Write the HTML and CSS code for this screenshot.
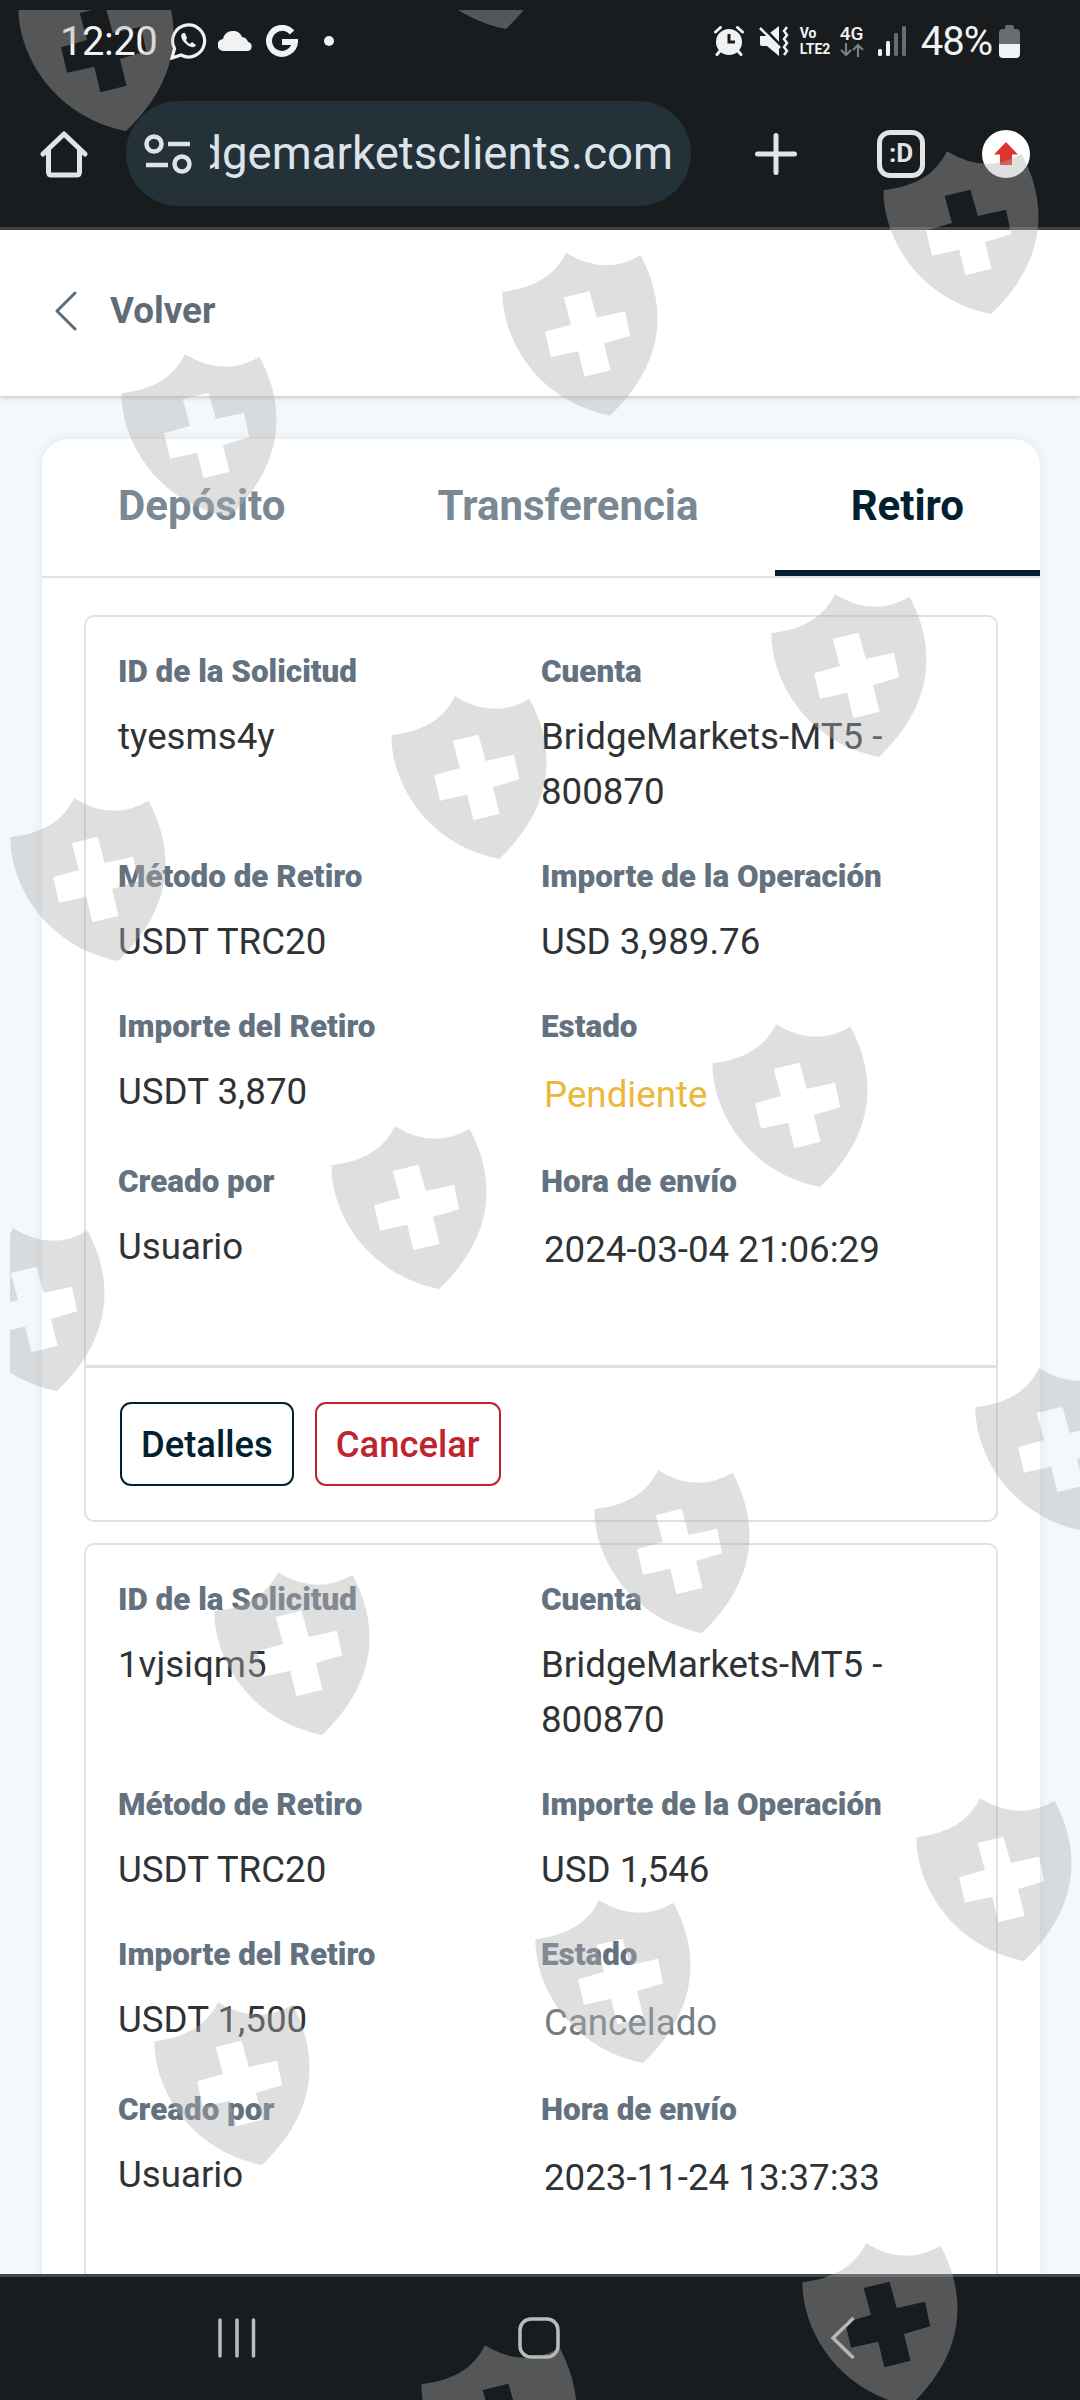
FILE: index.html
```html
<!DOCTYPE html>
<html lang="es">
<head>
    <meta charset="UTF-8">
    <meta name="viewport" content="width=device-width, initial-scale=1.0">
    <title>Retiro</title>
    <link rel="stylesheet" href="styles.css">
</head>
<body>
    <div class="status-bar">
        <span class="clock">12:20</span>
        <svg class="ico-whatsapp" width="38" height="38" viewBox="0 0 38 38" fill="none" stroke="#f0f2f3">
            <path d="M2 36l2.500-9.500A16 16 0 1 1 11 33z" stroke-width="3.200"/>
            <path d="M13 11c-3 2-2 6 2 10s9 6 11 2l-4-3-2 2c-2-1-3-2-4-4l1-2-2-5z" fill="#f0f2f3" stroke="none"/>
        </svg>
        <svg class="ico-cloud" width="36" height="20" viewBox="0 0 36 20" fill="#f0f2f3">
            <path d="M6 20a6 6 0 0 1-1-12A10 10 0 0 1 24 6a7 7 0 0 1 6 5 4.600 4.600 0 0 1 0 9z"/>
        </svg>
        <svg class="ico-google" width="32" height="33" viewBox="0 0 32 33" fill="none" stroke="#f0f2f3" stroke-width="6">
            <path d="M26 7.500A13 13 0 1 0 29 17H16"/>
        </svg>
        <span class="dot"></span>
        <div class="status-right">
            <svg class="ico-alarm" width="30" height="30" viewBox="0 0 30 30">
                <circle cx="15" cy="16" r="13" fill="#f0f2f3"/>
                <path d="M1.500 6l5-4.500M28.500 6l-5-4.500M6 25l-3 3.500M24 25l3 3.500" stroke="#f0f2f3" stroke-width="3" stroke-linecap="round"/>
                <path d="M15 8v8h6" fill="none" stroke="#181c1f" stroke-width="3"/>
            </svg>
            <svg class="ico-mute" width="30" height="30" viewBox="0 0 30 30">
                <path d="M1 10h6L20 0v30L8 20H3q-2 0-2-2z" fill="#f0f2f3"/>
                <path d="M2-1l19 20" stroke="#181c1f" stroke-width="3"/>
                <path d="M1 2l20 20" stroke="#f0f2f3" stroke-width="2.500"/>
                <path d="M28 1l-3 4 3 4-3 4 3 4-3 4 3 4-3 4" fill="none" stroke="#f0f2f3" stroke-width="2.500"/>
            </svg>
            <span class="volte"><span>Vo</span><span>LTE2</span></span>
            <span class="network">
                <span>4G</span>
                <svg width="24" height="14" viewBox="0 0 24 14" fill="none" stroke="#7b7f81" stroke-width="2.200">
                    <path d="M6 0v12M1 7l5 5 5-5M18 14V2M13 7l5-5 5 5"/>
                </svg>
            </span>
            <svg class="ico-signal" width="28" height="30" viewBox="0 0 28 30">
                <rect x="0" y="23" width="4" height="7" rx="1.500" fill="#f0f2f3"/>
                <rect x="8" y="15" width="4" height="15" rx="1.500" fill="#f0f2f3"/>
                <rect x="16" y="7" width="4" height="23" rx="1.500" fill="#696d6f"/>
                <rect x="24" y="0" width="4" height="30" rx="1.500" fill="#696d6f"/>
            </svg>
            <span class="battery-text">48%</span>
            <svg class="ico-battery" width="21" height="33" viewBox="0 0 21 33">
                <path d="M6 4V2q0-2 2-2h5q2 0 2 2v2h2q4 0 4 4v12H0V8q0-4 4-4z" fill="#696d6f"/>
                <path d="M0 19h21v10q0 4-4 4H4q-4 0-4-4z" fill="#f0f2f3"/>
            </svg>
        </div>
    </div>

    <div class="browser-bar">
        <svg class="ico-home" width="48" height="48" viewBox="0 0 48 48" fill="none" stroke="#e1e3e5" stroke-width="5" stroke-linecap="round" stroke-linejoin="round">
            <path d="M3 24L24 4l21 20M8.500 20v22q0 3 3 3h25q3 0 3-3V20"/>
        </svg>
        <div class="url-box">
            <svg width="48" height="40" viewBox="0 0 48 40" fill="none" stroke="#dde3ea" stroke-width="4.500">
                <circle cx="10" cy="10" r="7.500"/>
                <path d="M24 10h22M2 31h22"/>
                <circle cx="38" cy="30" r="7.500"/>
            </svg>
            <div class="url"><span>dgemarketsclients.com</span></div>
        </div>
        <svg class="ico-plus" width="42" height="42" viewBox="0 0 42 42" stroke="#e1e3e5" stroke-width="5" stroke-linecap="round">
            <path d="M21 2.500v37M2.500 21h37"/>
        </svg>
        <div class="tabs-count">:D</div>
        <svg class="ico-update" width="48" height="48" viewBox="0 0 48 48">
            <circle cx="24" cy="24" r="24" fill="#fff"/>
            <path d="M24 12L36 24.500h-6V35H18V24.500h-6z" fill="#dc362e"/>
        </svg>
    </div>

    <div class="back-bar">
        <svg width="22" height="40" viewBox="0 0 22 40" fill="none" stroke="#5f6c78" stroke-width="3" stroke-linecap="round" stroke-linejoin="round">
            <path d="M20 2L2 20l18 18"/>
        </svg>
        <a class="back-link">Volver</a>
    </div>

    <div class="content">
        <div class="panel">
            <div class="tabs">
                <div class="tab">Depósito</div>
                <div class="tab">Transferencia</div>
                <div class="tab active">Retiro</div>
            </div>

            <div class="request">
                <div class="request-info">
                    <div class="field"><label>ID de la Solicitud</label><p>tyesms4y</p></div>
                    <div class="field"><label>Cuenta</label><p>BridgeMarkets-MT5 - 800870</p></div>
                    <div class="field"><label>Método de Retiro</label><p>USDT TRC20</p></div>
                    <div class="field"><label>Importe de la Operación</label><p>USD 3,989.76</p></div>
                    <div class="field"><label>Importe del Retiro</label><p>USDT 3,870</p></div>
                    <div class="field"><label>Estado</label><p class="boxed pending">Pendiente</p></div>
                    <div class="field"><label>Creado por</label><p>Usuario</p></div>
                    <div class="field"><label>Hora de envío</label><p class="boxed">2024-03-04 21:06:29</p></div>
                </div>
                <div class="request-actions">
                    <button class="btn">Detalles</button>
                    <button class="btn btn-cancel">Cancelar</button>
                </div>
            </div>

            <div class="request">
                <div class="request-info">
                    <div class="field"><label>ID de la Solicitud</label><p>1vjsiqm5</p></div>
                    <div class="field"><label>Cuenta</label><p>BridgeMarkets-MT5 - 800870</p></div>
                    <div class="field"><label>Método de Retiro</label><p>USDT TRC20</p></div>
                    <div class="field"><label>Importe de la Operación</label><p>USD 1,546</p></div>
                    <div class="field"><label>Importe del Retiro</label><p>USDT 1,500</p></div>
                    <div class="field"><label>Estado</label><p class="boxed cancelled">Cancelado</p></div>
                    <div class="field"><label>Creado por</label><p>Usuario</p></div>
                    <div class="field"><label>Hora de envío</label><p class="boxed">2023-11-24 13:37:33</p></div>
                </div>
            </div>
        </div>
    </div>

    <div class="nav-bar">
        <svg width="38" height="40" viewBox="0 0 38 40" stroke="#b9bcbd" stroke-width="3.500" stroke-linecap="round">
            <path d="M2 2v36M19 2v36M35.500 2v36"/>
        </svg>
        <svg class="nav-home" width="42" height="42" viewBox="0 0 42 42" fill="none" stroke="#b9bcbd" stroke-width="3.500">
            <rect x="2" y="2" width="38" height="38" rx="11"/>
        </svg>
        <svg width="25" height="42" viewBox="0 0 25 42" fill="none" stroke="#b9bcbd" stroke-width="3.500">
            <path d="M23.500 1L3 21l20.500 20"/>
        </svg>
    </div>

    <!-- shield watermark -->
    <svg class="watermark" width="1070" height="2390" viewBox="10 10 1070 2390">
        <defs>
            <path id="shield" fill-rule="evenodd" d="M.4 39.300Q48 34 64 .3 103 24 138.500 2.700C164 50 166 108 108 163 34 148 0 85 .4 39.300zM61.700 45l25.800-6.300 7.300 26.300 28.200-6.300 5.200 24.600-26.200 7.700 6.500 26.700-26.100 6.600-6.200-25.600-27.200 6-5.900-25.400 25.900-7.300z"/>
        </defs>
        <use href="#shield" x="18" y="-32"/>
        <use href="#shield" x="398" y="-134"/>
        <use href="#shield" x="883" y="151"/>
        <use href="#shield" x="502" y="252.500"/>
        <use href="#shield" x="121" y="354"/>
        <use href="#shield" x="771" y="594"/>
        <use href="#shield" x="391" y="696"/>
        <use href="#shield" x="10" y="798"/>
        <use href="#shield" x="712" y="1024"/>
        <use href="#shield" x="331" y="1126"/>
        <use href="#shield" x="-51" y="1228"/>
        <use href="#shield" x="975" y="1368"/>
        <use href="#shield" x="594" y="1470"/>
        <use href="#shield" x="214" y="1572"/>
        <use href="#shield" x="916" y="1798"/>
        <use href="#shield" x="535" y="1900"/>
        <use href="#shield" x="154" y="2002"/>
        <use href="#shield" x="802" y="2243"/>
        <use href="#shield" x="421" y="2345"/>
    </svg>
</body>
</html>
```
FILE: styles.css
```css
* {
    box-sizing: border-box;
}
body {
    margin: 0;
    height: 2400px;
    display: flex;
    flex-direction: column;
    overflow: hidden;
    font-family: Roboto, sans-serif;
    background: #f3f8fc;
    color: #2f3336;
}
svg {
    display: block;
    flex-shrink: 0;
}
.status-bar {
    display: flex;
    align-items: center;
    height: 82px;
    padding: 0 60px;
    background: #181c1f;
    color: #f0f2f3;
    flex-shrink: 0;
}
.clock {
    width: 96px;
    font-size: 40px;
    letter-spacing: -0.5px;
    white-space: nowrap;
}
.ico-whatsapp {
    margin-left: 14px;
}
.ico-cloud {
    margin-left: 10px;
}
.ico-google {
    margin-left: 12px;
}
.dot {
    width: 10px;
    height: 10px;
    margin-left: 26px;
    border-radius: 50%;
    background: #f0f2f3;
}
.status-right {
    display: flex;
    align-items: center;
    margin-left: auto;
    height: 34px;
}
.ico-mute {
    margin-left: 15px;
}
.volte {
    display: flex;
    flex-direction: column;
    width: 34px;
    margin-left: 11px;
    font-size: 14px;
    line-height: 16px;
    font-weight: 700;
}
.network {
    display: flex;
    flex-direction: column;
    margin-left: 6px;
    font-size: 19px;
    line-height: 18px;
    font-weight: 500;
}
.ico-signal {
    margin-left: 14px;
}
.battery-text {
    margin-left: 15px;
    font-size: 40px;
    letter-spacing: -1px;
}
.ico-battery {
    margin-left: 7px;
}
.browser-bar {
    display: flex;
    align-items: center;
    height: 148px;
    padding: 0 50px 2px 40px;
    background: #181c1f;
    border-bottom: 3px solid #40464b;
    flex-shrink: 0;
}
.url-box {
    display: flex;
    align-items: center;
    width: 566px;
    height: 105px;
    margin-left: 38px;
    padding-left: 18px;
    border-radius: 53px;
    background: #243138;
}
.url {
    display: flex;
    justify-content: flex-end;
    width: 463px;
    margin-left: 18px;
    overflow: hidden;
    font-size: 45.6px;
    color: #dde3ea;
}
.ico-plus {
    margin-left: 64px;
}
.tabs-count {
    width: 48px;
    height: 48px;
    margin-left: 80px;
    border: 5px solid #e1e3e5;
    border-radius: 13px;
    color: #e1e3e5;
    font-size: 26px;
    font-weight: 700;
    line-height: 36px;
    text-align: center;
}
.ico-update {
    margin-left: 57px;
}
.back-bar {
    display: flex;
    align-items: center;
    height: 166px;
    padding: 0 55px 5px;
    background: #fff;
    box-shadow: 0 1px 5px rgba(0, 0, 0, 0.25);
    position: relative;
    flex-shrink: 0;
}
.back-link {
    margin-left: 33px;
    font-size: 36.8px;
    font-weight: 700;
    color: #5f6c78;
}
.content {
    flex: 1;
    min-height: 0;
    padding: 43px 40px 0 42px;
    overflow: hidden;
}
.panel {
    height: 2000px;
    background: #fff;
    border-radius: 26px;
    box-shadow: 0 0 12px rgba(0, 0, 0, 0.08);
}
.tabs {
    display: flex;
    justify-content: space-between;
    height: 139px;
    margin-bottom: 37px;
    border-bottom: 2px solid #e0e2e4;
}
.tab {
    padding: 0 76px;
    font-size: 42px;
    font-weight: 700;
    line-height: 133px;
    color: #7a8894;
}
.tab.active {
    border-bottom: 6px solid #02212e;
    color: #02212e;
}
.request {
    margin: 0 42px 21px;
    border: 2px solid #dfe0e2;
    border-radius: 10px;
}
.request-info {
    display: grid;
    grid-template-columns: 423px 1fr;
    height: 748px;
    grid-template-rows: 205px 150px 155px 1fr;
    padding: 30px 32px 0;
}
.field label {
    display: block;
    font-size: 31.4px;
    font-weight: 900;
    line-height: 50px;
    color: #64717e;
}
.field p {
    width: 400px;
    margin: 11.5px 0 0;
    font-size: 36.7px;
    line-height: 55px;
}
.field .boxed {
    padding: 3px 0 0 3px;
}
.field .pending {
    color: #ecb83c;
}
.field .cancelled {
    color: #737c84;
}
.request-actions {
    display: flex;
    gap: 21px;
    height: 155px;
    padding: 34px;
    border-top: 3px solid #dfe0e2;
}
.btn {
    height: 84px;
    padding: 0 19px;
    border: 2px solid #02212e;
    border-radius: 11px;
    background: #fff;
    color: #02212e;
    font-family: inherit;
    font-size: 36.4px;
    font-weight: 500;
}
.btn-cancel {
    border-color: #bf242c;
    color: #bf242c;
}
.nav-bar {
    display: flex;
    justify-content: space-between;
    align-items: center;
    height: 126px;
    padding: 0 225px 2px 218px;
    background: #181c1f;
    border-top: 3px solid #42474a;
    z-index: 1;
    flex-shrink: 0;
}
.nav-home {
    margin-right: 9px;
}
.watermark {
    position: absolute;
    left: 10px;
    top: 10px;
    z-index: 2;
    fill: rgba(175, 175, 175, 0.4);
}
```
